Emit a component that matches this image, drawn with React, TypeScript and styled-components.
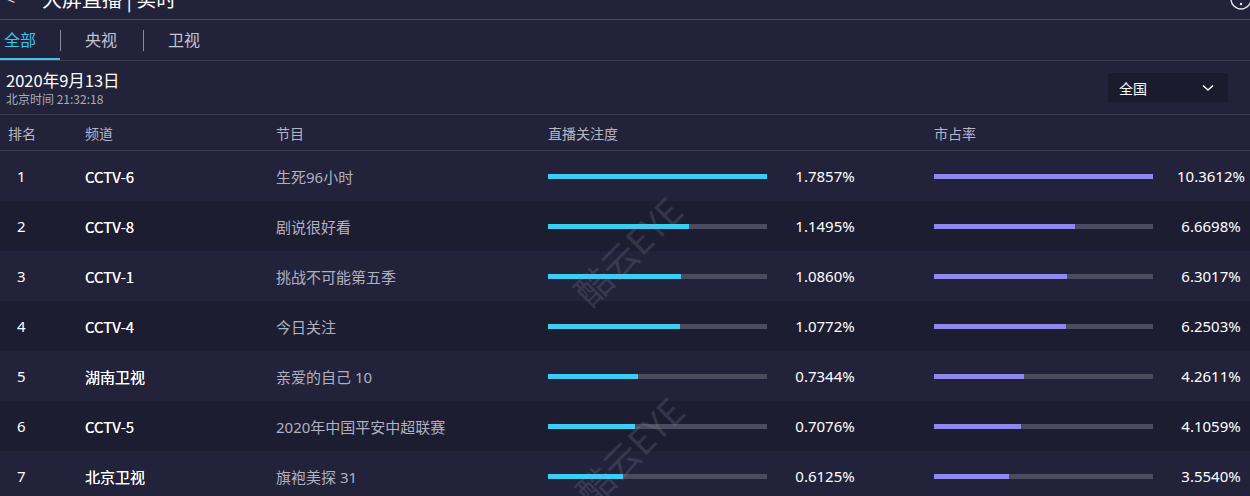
import React from 'react';
import styled, { createGlobalStyle } from 'styled-components';

const GlobalStyle = createGlobalStyle`
  html, body {
    margin: 0;
    padding: 0;
    background: #22223a;
    overflow: hidden;
  }
  body {
    font-family: "Noto Sans", "Noto Sans CJK SC", sans-serif;
    color: #ffffff;
  }
`;

const Page = styled.div`
  width: 1250px;
  height: 496px;
  overflow: hidden;
  position: relative;
  background: #22223a;
`;

const Scroller = styled.div`
  margin-top: -22px;
`;

const TopBar = styled.div`
  height: 42px;
  display: flex;
  align-items: center;
  padding: 0 0 0 6px;
  border-bottom: 1px solid #46485f;
  box-sizing: border-box;
  position: relative;
`;

const BackArrow = styled.span`
  font-size: 16px;
  color: #d8d8e0;
  width: 36px;
`;

const PageTitle = styled.span`
  font-size: 20px;
  color: #ffffff;
  font-family: "Noto Sans CJK SC", sans-serif;
`;

const CornerIcon = styled.svg`
  position: absolute;
  right: -3px;
  top: 9px;
`;

const Tabs = styled.div`
  height: 41px;
  display: flex;
  align-items: center;
  border-bottom: 1px solid #3b3d55;
  box-sizing: border-box;
`;

const Tab = styled.div<{ $active?: boolean }>`
  height: 100%;
  width: ${p => (p.$active ? '60px' : '83px')};
  display: flex;
  align-items: center;
  padding-left: ${p => (p.$active ? '4px' : '25px')};
  box-sizing: border-box;
  font-size: 16px;
  font-family: "Noto Sans CJK SC", sans-serif;
  color: ${p => (p.$active ? '#3ac6ee' : '#c2c3cf')};
  border-bottom: ${p => (p.$active ? '2px solid #3ac6ee' : '2px solid transparent')};
  position: relative;
  &:not(:first-child)::before {
    content: '';
    position: absolute;
    left: 0;
    top: 10px;
    height: 21px;
    width: 1px;
    background: #8a8b9c;
  }
`;

const DateBar = styled.div`
  height: 54px;
  display: flex;
  align-items: center;
  justify-content: space-between;
  padding: 0 22px 0 6px;
  border-bottom: 1px solid #3b3d55;
  box-sizing: border-box;
`;

const DateBlock = styled.div`
  display: flex;
  flex-direction: column;
  gap: 1px;
`;

const DateText = styled.span`
  font-size: 16.5px;
  line-height: 20px;
  color: #ffffff;
  font-family: "Noto Sans CJK SC", sans-serif;
`;

const TimeText = styled.span`
  font-size: 12px;
  line-height: 15px;
  color: #a9aab8;
  font-family: "Noto Sans CJK SC", sans-serif;
`;

const RegionSelect = styled.div`
  width: 120px;
  height: 29px;
  background: #1b1b2e;
  display: flex;
  align-items: center;
  justify-content: space-between;
  padding: 0 14px 0 11px;
  box-sizing: border-box;
  font-size: 14px;
  color: #ffffff;
  font-family: "Noto Sans CJK SC", sans-serif;
`;

const Row = styled.div<{ $shade?: boolean; $head?: boolean }>`
  display: grid;
  grid-template-columns: 85px 191px 272px 386px 335px;
  align-items: center;
  height: ${p => (p.$head ? '36px' : '50px')};
  background: ${p => (p.$shade ? '#1d1d31' : '#22223a')};
  border-bottom: ${p => (p.$head ? '1px solid #3b3d55' : 'none')};
  box-sizing: border-box;
`;

const HeadCell = styled.div<{ $pad?: number }>`
  font-size: 14px;
  color: #b6b7c5;
  font-family: "Noto Sans CJK SC", sans-serif;
  padding-left: ${p => p.$pad ?? 0}px;
`;

const Rank = styled.div`
  font-size: 15px;
  padding-left: 17px;
  color: #ffffff;
`;

const Channel = styled.div`
  font-size: 15px;
  font-weight: 400;
  color: #ffffff;
  font-family: "Noto Sans CJK SC", sans-serif;
  text-shadow: 0 0 0.4px #ffffff;
`;

const Program = styled.div`
  font-size: 15px;
  color: #b0b1c0;
  font-family: "Noto Sans", "Noto Sans CJK SC", sans-serif;
`;

const Metric = styled.div`
  display: flex;
  align-items: center;
`;

const Track = styled.div`
  width: 219px;
  flex-shrink: 0;
  height: 5px;
  background: #4c4c60;
  display: flex;
`;

const Fill = styled.div<{ $color: string }>`
  height: 100%;
  background: ${p => p.$color};
`;

const Value = styled.div`
  width: 116px;
  flex-shrink: 0;
  text-align: center;
  font-size: 15px;
  color: #ffffff;
`;

const Watermark = styled.div<{ $top: number; $left: number }>`
  position: absolute;
  top: ${p => p.$top}px;
  left: ${p => p.$left}px;
  transform: rotate(-45deg);
  font-size: 36px;
  line-height: 40px;
  color: rgba(160, 160, 185, 0.2);
  font-family: "Noto Sans CJK SC", sans-serif;
  pointer-events: none;
  white-space: nowrap;
`;

const rows = [
  { rank: 1, channel: 'CCTV-6', program: '生死96小时', att: 1.7857, share: 10.3612 },
  { rank: 2, channel: 'CCTV-8', program: '剧说很好看', att: 1.1495, share: 6.6698 },
  { rank: 3, channel: 'CCTV-1', program: '挑战不可能第五季', att: 1.086, share: 6.3017 },
  { rank: 4, channel: 'CCTV-4', program: '今日关注', att: 1.0772, share: 6.2503 },
  { rank: 5, channel: '湖南卫视', program: '亲爱的自己 10', att: 0.7344, share: 4.2611 },
  { rank: 6, channel: 'CCTV-5', program: '2020年中国平安中超联赛', att: 0.7076, share: 4.1059 },
  { rank: 7, channel: '北京卫视', program: '旗袍美探 31', att: 0.6125, share: 3.554 },
];

const maxAtt = Math.max(...rows.map(r => r.att));
const maxShare = Math.max(...rows.map(r => r.share));

const App: React.FC = () => {
  return (
    <Page>
      <GlobalStyle />
      <Scroller>
        <TopBar>
          <BackArrow>&lt;</BackArrow>
          <PageTitle>大屏直播 | 实时</PageTitle>
          <CornerIcon width="24" height="24" viewBox="0 0 24 24">
            <circle cx="12" cy="12" r="10" fill="none" stroke="#e6e6ee" strokeWidth="1.4" />
            <circle cx="12" cy="17" r="1.2" fill="#e6e6ee" />
          </CornerIcon>
        </TopBar>
        <Tabs>
          <Tab $active>全部</Tab>
          <Tab>央视</Tab>
          <Tab>卫视</Tab>
        </Tabs>
        <DateBar>
          <DateBlock>
            <DateText>2020年9月13日</DateText>
            <TimeText>北京时间 21:32:18</TimeText>
          </DateBlock>
          <RegionSelect>
            <span>全国</span>
            <svg width="12" height="8" viewBox="0 0 12 8">
              <path d="M1 1.5 L6 6 L11 1.5" fill="none" stroke="#ffffff" strokeWidth="1.5" />
            </svg>
          </RegionSelect>
        </DateBar>
        <Row $head>
          <HeadCell $pad={8}>排名</HeadCell>
          <HeadCell>频道</HeadCell>
          <HeadCell>节目</HeadCell>
          <HeadCell>直播关注度</HeadCell>
          <HeadCell>市占率</HeadCell>
        </Row>
        {rows.map((r, i) => (
          <Row key={r.rank} $shade={i % 2 === 1}>
            <Rank>{r.rank}</Rank>
            <Channel>{r.channel}</Channel>
            <Program>{r.program}</Program>
            <Metric>
              <Track>
                <Fill $color="#3ccdf3" style={{ width: `${(r.att / maxAtt) * 100}%` }} />
              </Track>
              <Value>{r.att.toFixed(4)}%</Value>
            </Metric>
            <Metric>
              <Track>
                <Fill $color="#8f89ef" style={{ width: `${(r.share / maxShare) * 100}%` }} />
              </Track>
              <Value>{r.share.toFixed(4)}%</Value>
            </Metric>
          </Row>
        ))}
      </Scroller>
      <Watermark $top={230} $left={560}>酷云EYE</Watermark>
      <Watermark $top={430} $left={562}>酷云EYE</Watermark>
    </Page>
  );
};

export default App;
